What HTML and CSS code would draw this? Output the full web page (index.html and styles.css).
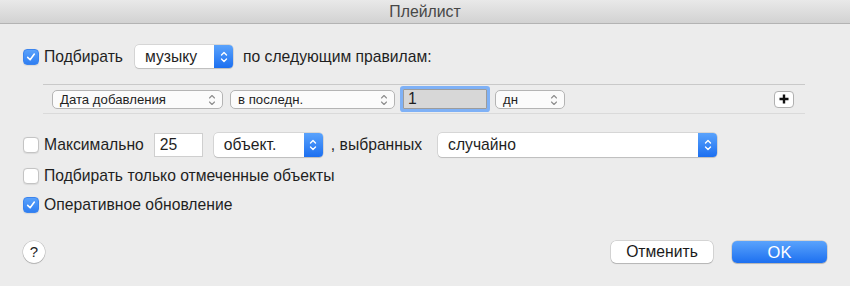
FILE: index.html
```html
<!DOCTYPE html>
<html lang="ru">
<head>
  <meta charset="UTF-8">
  <title>Плейлист</title>
  <link rel="stylesheet" href="styles.css">
</head>
<body>
  <div class="window">
    <header class="titlebar">Плейлист</header>
    <div class="content">
      <div class="row row-main">
        <span class="check on"><svg viewBox="0 0 16 16"><path d="M4.2 8.4 L7 11.2 L11.8 4.6" /></svg></span>
        <span class="label">Подбирать</span>
        <div class="popup popup-music">
          <span class="popup-text">музыку</span>
          <span class="arrows"><svg viewBox="0 0 10 16"><path d="M2.5 6 L5 3.5 L7.5 6 M2.5 10 L5 12.5 L7.5 10" /></svg></span>
        </div>
        <span class="label">по следующим правилам:</span>
      </div>

      <div class="rules">
        <div class="mini-popup mp-date">Дата добавления<svg viewBox="0 0 10 16"><path d="M2.5 6 L5 3.5 L7.5 6 M2.5 10 L5 12.5 L7.5 10" /></svg></div>
        <div class="mini-popup mp-last">в последн.<svg viewBox="0 0 10 16"><path d="M2.5 6 L5 3.5 L7.5 6 M2.5 10 L5 12.5 L7.5 10" /></svg></div>
        <div class="field field-focus">1</div>
        <div class="mini-popup mp-unit">дн<svg viewBox="0 0 10 16"><path d="M2.5 6 L5 3.5 L7.5 6 M2.5 10 L5 12.5 L7.5 10" /></svg></div>
        <div class="plus-btn"><svg viewBox="0 0 10 10"><path d="M5 0.5 V9.5 M0.5 5 H9.5" /></svg></div>
      </div>

      <div class="row row-limit">
        <span class="check"></span>
        <span class="label">Максимально</span>
        <div class="field field-num">25</div>
        <div class="popup popup-obj">
          <span class="popup-text">объект.</span>
          <span class="arrows"><svg viewBox="0 0 10 16"><path d="M2.5 6 L5 3.5 L7.5 6 M2.5 10 L5 12.5 L7.5 10" /></svg></span>
        </div>
        <span class="label">, выбранных</span>
        <div class="popup popup-random">
          <span class="popup-text">случайно</span>
          <span class="arrows"><svg viewBox="0 0 10 16"><path d="M2.5 6 L5 3.5 L7.5 6 M2.5 10 L5 12.5 L7.5 10" /></svg></span>
        </div>
      </div>

      <div class="row row-opt">
        <span class="check"></span>
        <span class="label">Подбирать только отмеченные объекты</span>
      </div>
      <div class="row row-opt row-live">
        <span class="check on"><svg viewBox="0 0 16 16"><path d="M4.2 8.4 L7 11.2 L11.8 4.6" /></svg></span>
        <span class="label">Оперативное обновление</span>
      </div>

      <div class="footer">
        <div class="help">?</div>
        <div class="buttons">
          <button class="btn">Отменить</button>
          <button class="btn btn-ok">OK</button>
        </div>
      </div>
    </div>
  </div>
</body>
</html>
```

FILE: styles.css
```css
* { box-sizing: border-box; }
body { margin: 0; font-family: "Liberation Sans", Arial, sans-serif; background: #ececec; color: #1f1f1f; }
.window { width: 850px; height: 286px; background: #ececec; overflow: hidden; }

.titlebar { height: 24px; line-height: 23px; text-align: center; font-size: 15.8px; color: #474747;
  background: linear-gradient(#e9e9e9, #d2d2d2); border-bottom: 1px solid #b3b3b3; }

.content { padding: 21px 0 0 23px; }

.row { display: flex; align-items: center; }
.label { font-size: 15.7px; white-space: nowrap; }

.check { width: 16px; height: 16px; border-radius: 4px; background: #fff; border: 1px solid #c4c4c4;
  box-shadow: 0 0.5px 1px rgba(0,0,0,0.08); margin-right: 5px; flex: none; display: flex; }
.check.on { background: linear-gradient(#5aa2fb, #2f7ff2); border-color: #3b84ee; }
.check svg { width: 100%; height: 100%; }
.check svg path { fill: none; stroke: #fff; stroke-width: 1.8; stroke-linecap: round; stroke-linejoin: round; }

.popup { display: flex; height: 23px; background: #fff; border-radius: 4px;
  box-shadow: 0 0 0 0.5px rgba(0,0,0,0.18), 0 1px 1px rgba(0,0,0,0.12); overflow: hidden; }
.popup-text { flex: 1; font-size: 15.7px; line-height: 23px; padding-left: 10px; }
.arrows { width: 19px; background: linear-gradient(#5aa3fc, #1c6ff0); display: flex; align-items: center; justify-content: center; }
.arrows svg { width: 10px; height: 16px; }
.arrows path { fill: none; stroke: #fff; stroke-width: 1.4; stroke-linecap: round; stroke-linejoin: round; }

.row-main { height: 23px; }
.popup-music { width: 98px; margin: 0 10px 0 12px; }

.rules { display: flex; align-items: center; height: 30px; margin: 16px 45px 0 20px;
  border-top: 1px solid #c9c9c9; border-bottom: 1px solid #dadada; padding: 0 11px 0 9px; }

.mini-popup { position: relative; height: 19px; line-height: 17px; font-size: 13.2px; padding-left: 7px;
  background: #fbfbfb; border: 1px solid #b4b4b4; border-radius: 5px; margin-right: 7px; }
.mini-popup svg { position: absolute; right: 5px; top: 1px; width: 10px; height: 16px; }
.mini-popup path { fill: none; stroke: #8c8c8c; stroke-width: 1.1; stroke-linecap: round; stroke-linejoin: round; }
.mp-date { width: 171px; }
.mp-last { width: 165px; margin-right: 8px; }
.mp-unit { width: 70px; margin-left: 8px; }

.field { font-size: 15.7px; background: #fff; border: 1px solid #cfcfcf; }
.field-focus { width: 84px; height: 20px; line-height: 18px; padding-left: 4px; background: #d7d7d7;
  border-color: #9c9c9c; box-shadow: 0 0 0 3px #7fb1f6; border-radius: 1px; }

.plus-btn { margin-left: auto; width: 20px; height: 17px; background: #fff; border: 1px solid #b0b0b0;
  border-radius: 4px; display: flex; align-items: center; justify-content: center; }
.plus-btn svg { width: 10px; height: 10px; }
.plus-btn path { stroke: #111; stroke-width: 2.4; }

.row-limit { height: 24px; margin-top: 19px; }
.field-num { width: 49px; height: 24px; line-height: 22px; padding-left: 5px; margin: 0 11px 0 10px; }
.popup-obj { width: 109px; height: 24px; margin-right: 8px; }
.popup-obj .popup-text, .popup-random .popup-text { line-height: 24px; }
.popup-random { width: 279px; height: 24px; margin-left: 16px; }

.row-opt { height: 20px; margin-top: 9px; }
.row-live { margin-top: 9px; }

.footer { display: flex; align-items: center; margin-top: 26px; padding-right: 23px; }
.help { width: 22px; height: 22px; border-radius: 50%; background: #fff; text-align: center;
  line-height: 22px; font-size: 15px; color: #222;
  box-shadow: 0 0 0 0.5px rgba(0,0,0,0.2), 0 1px 1px rgba(0,0,0,0.15); }
.buttons { margin-left: auto; display: flex; gap: 19px; }
.btn { font-family: inherit; font-size: 15.7px; height: 22px; padding: 0; border: none; border-radius: 5px;
  background: #fff; color: #1a1a1a; width: 102px;
  box-shadow: 0 0 0 0.5px rgba(0,0,0,0.2), 0 1px 1px rgba(0,0,0,0.15); }
.btn-ok { width: 95px; color: #fff; background: linear-gradient(#5aa3fc, #1d70f0); font-size: 16.5px; }
```
